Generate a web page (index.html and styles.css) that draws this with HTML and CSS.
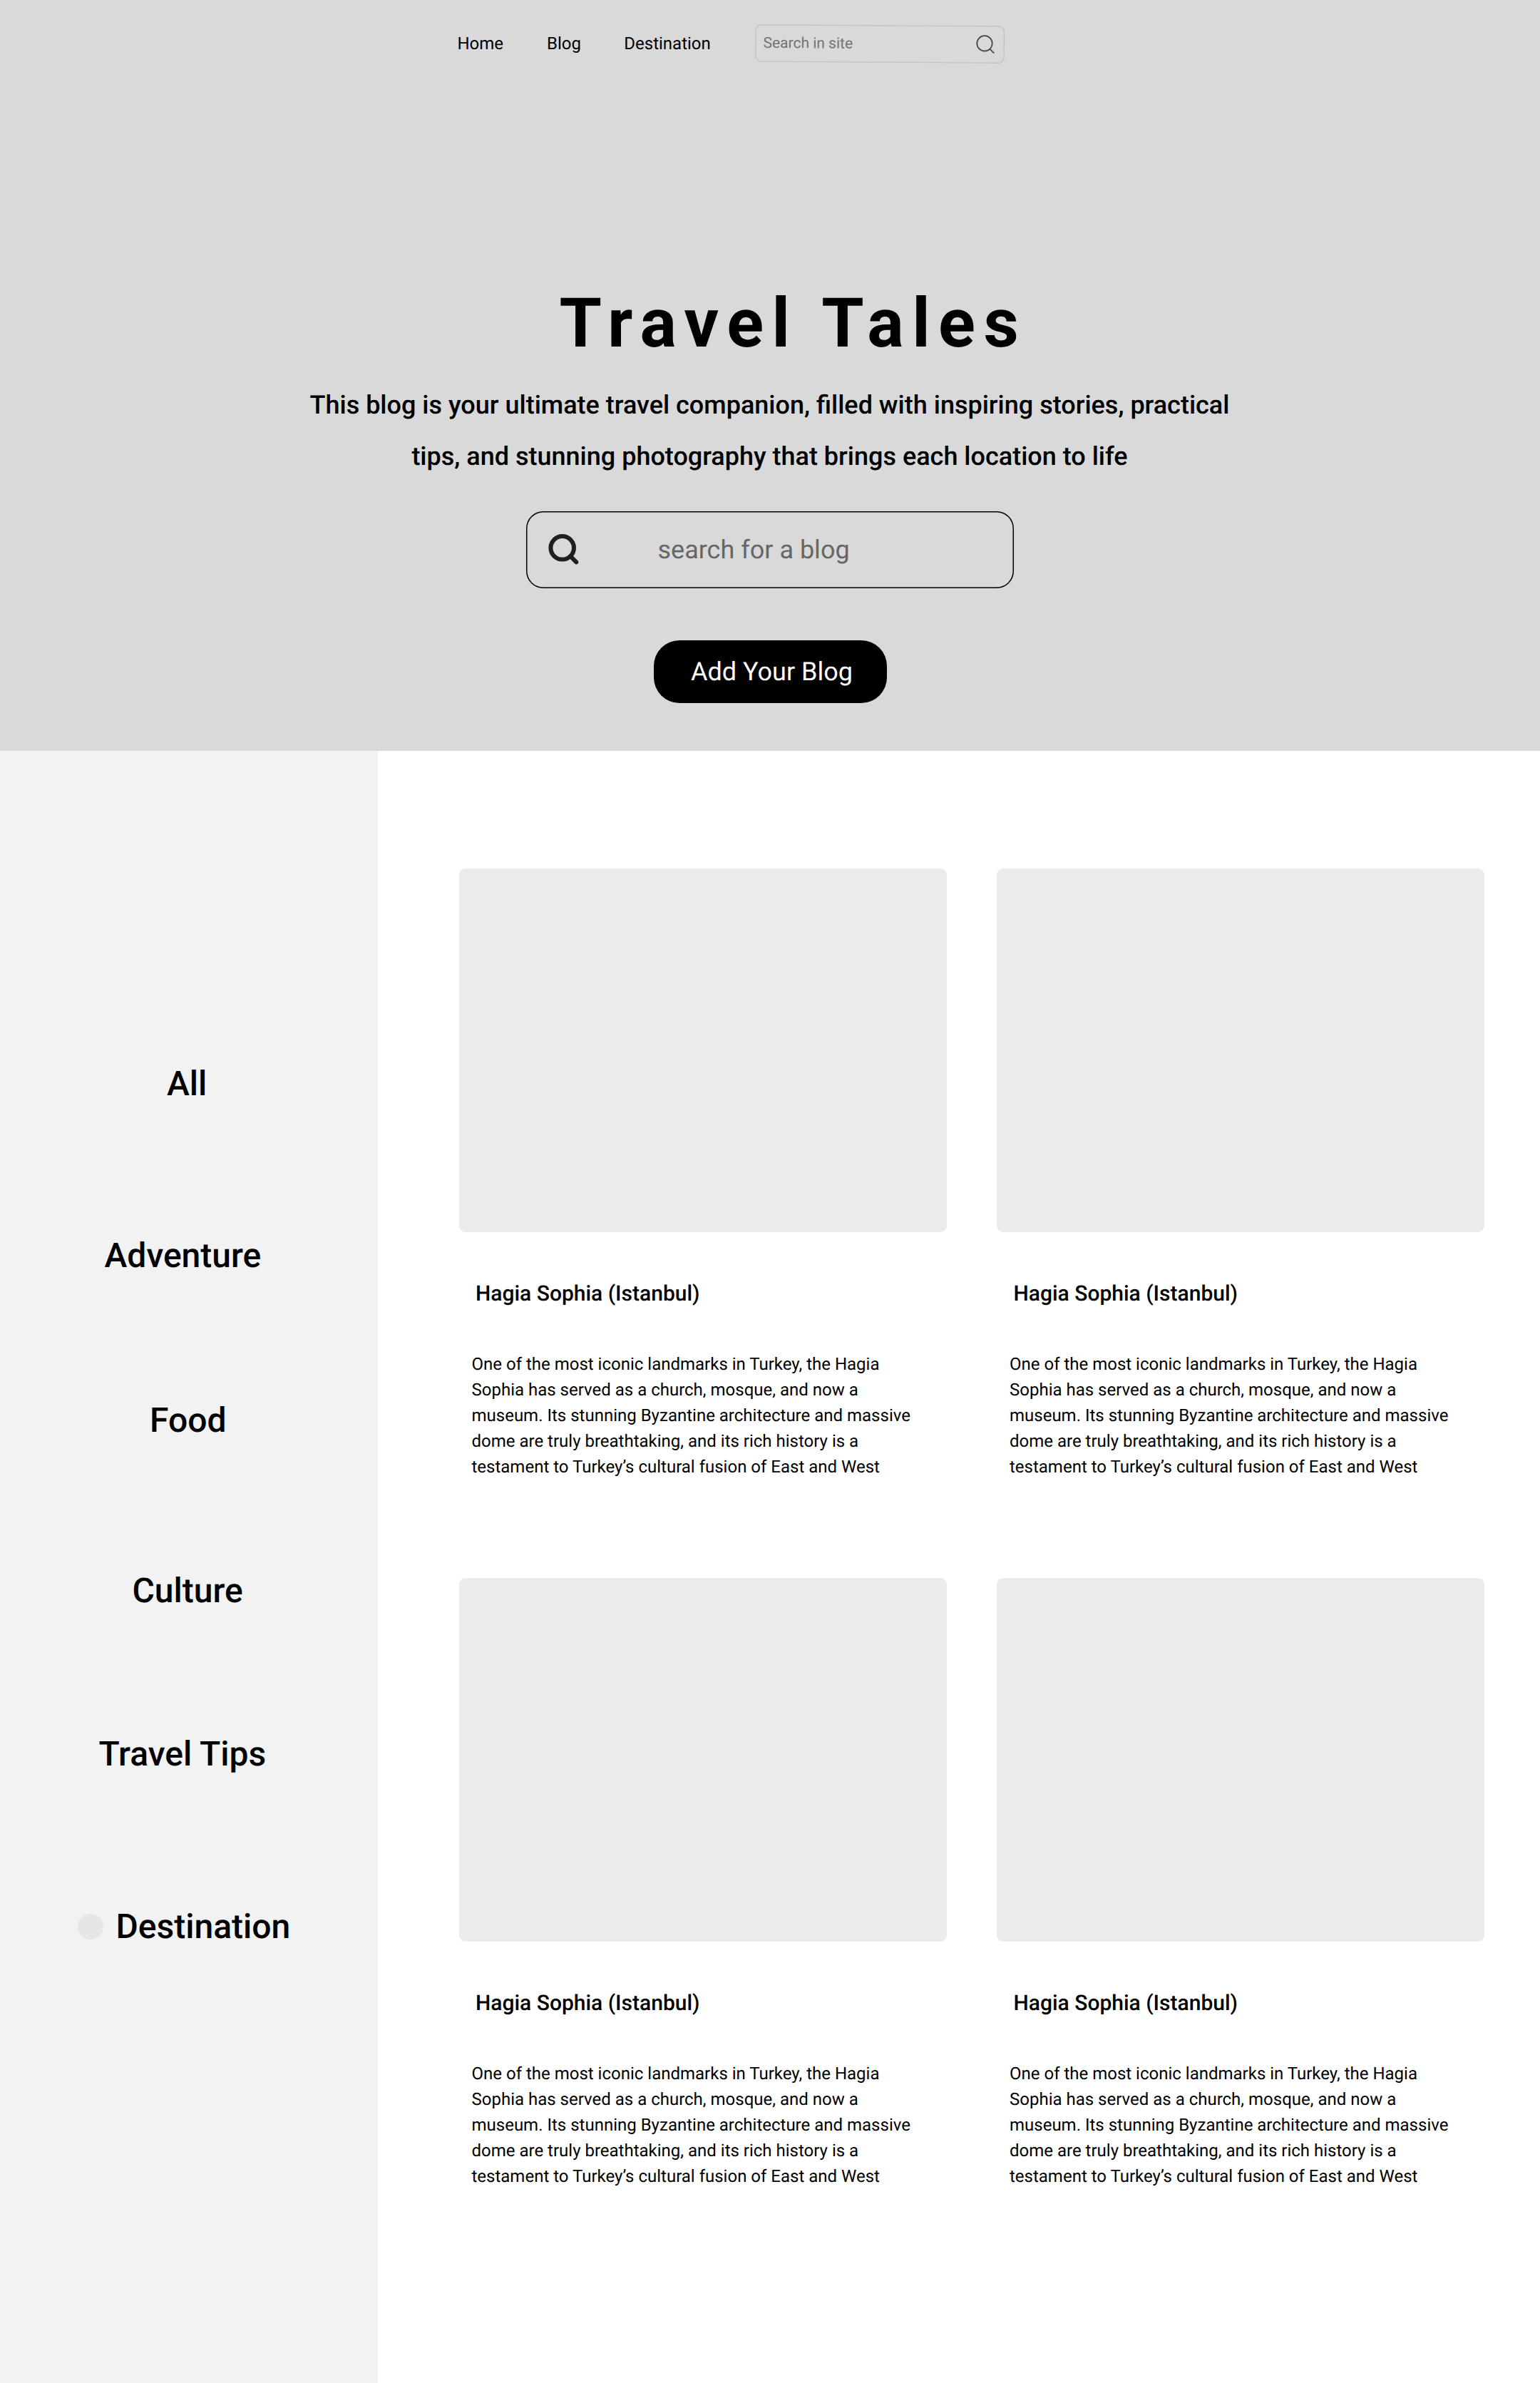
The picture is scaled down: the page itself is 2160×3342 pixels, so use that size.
FILE: index.html
```html
<!DOCTYPE html>
<html lang="en">
<head>
<meta charset="utf-8">
<title>Travel Tales</title>
<link rel="stylesheet" href="styles.css">
</head>
<body>
<header class="hero">
  <nav class="nav">
    <a class="nav-link">Home</a>
    <a class="nav-link">Blog</a>
    <a class="nav-link">Destination</a>
    <div class="site-search">
      <span class="site-search-text">Search in site</span>
      <svg class="site-search-icon" width="27" height="27" viewBox="0 0 27 27" fill="none" stroke="#444" stroke-width="1.7">
        <circle cx="12" cy="12" r="10.7"/>
        <path d="M19.3 19.6L25.4 25.6"/>
      </svg>
    </div>
  </nav>
  <h1 class="title">Travel Tales</h1>
  <p class="subtitle">This blog is your ultimate travel companion, filled with inspiring stories, practical<br>tips, and stunning photography that brings each location to life</p>
  <div class="blog-search">
    <svg class="blog-search-icon" width="44" height="44" viewBox="0 0 44 44" fill="none" stroke="#1f1f1f" stroke-linecap="round">
      <circle cx="19.7" cy="19.3" r="16.3" stroke-width="6"/>
      <path d="M31 31L39.3 39.3" stroke-width="6"/>
    </svg>
    <span class="blog-search-text">search for a blog</span>
  </div>
  <a class="add-button">Add Your Blog</a>
</header>
<div class="page">
  <aside class="sidebar">
    <a class="category all">All</a>
    <a class="category adventure">Adventure</a>
    <a class="category food">Food</a>
    <a class="category culture">Culture</a>
    <a class="category tips">Travel Tips</a>
    <a class="category destination"><span class="dot"></span>Destination</a>
  </aside>
  <main class="cards">
    <article class="card">
      <div class="card-image"></div>
      <h2 class="card-title">Hagia Sophia (Istanbul)</h2>
      <p class="card-text">One of the most iconic landmarks in Turkey, the Hagia<br>Sophia has served as a church, mosque, and now a<br>museum. Its stunning Byzantine architecture and massive<br>dome are truly breathtaking, and its rich history is a<br>testament to Turkey’s cultural fusion of East and West</p>
    </article>
    <article class="card">
      <div class="card-image"></div>
      <h2 class="card-title">Hagia Sophia (Istanbul)</h2>
      <p class="card-text">One of the most iconic landmarks in Turkey, the Hagia<br>Sophia has served as a church, mosque, and now a<br>museum. Its stunning Byzantine architecture and massive<br>dome are truly breathtaking, and its rich history is a<br>testament to Turkey’s cultural fusion of East and West</p>
    </article>
    <article class="card">
      <div class="card-image"></div>
      <h2 class="card-title">Hagia Sophia (Istanbul)</h2>
      <p class="card-text">One of the most iconic landmarks in Turkey, the Hagia<br>Sophia has served as a church, mosque, and now a<br>museum. Its stunning Byzantine architecture and massive<br>dome are truly breathtaking, and its rich history is a<br>testament to Turkey’s cultural fusion of East and West</p>
    </article>
    <article class="card">
      <div class="card-image"></div>
      <h2 class="card-title">Hagia Sophia (Istanbul)</h2>
      <p class="card-text">One of the most iconic landmarks in Turkey, the Hagia<br>Sophia has served as a church, mosque, and now a<br>museum. Its stunning Byzantine architecture and massive<br>dome are truly breathtaking, and its rich history is a<br>testament to Turkey’s cultural fusion of East and West</p>
    </article>
  </main>
</div>
</body>
</html>
```
FILE: styles.css
```css
* { box-sizing: border-box; margin: 0; padding: 0; }

body {
  width: 2160px;
  background: #fff;
  color: #000;
  font-family: Roboto, "Liberation Sans", sans-serif;
  text-rendering: geometricPrecision;
}

.hero {
  display: flex;
  flex-direction: column;
  align-items: center;
  height: 1053px;
  background: #d9d9d9;
}

.nav {
  display: grid;
  grid-template-columns: 125.5px 108.3px 183.7px 350px;
  align-items: center;
  align-self: flex-start;
  height: 55px;
  margin: 33.5px 0 0 641.5px;
}

.nav-link { font-size: 24px; line-height: 36px; white-space: nowrap; }

.site-search {
  display: flex;
  align-items: center;
  justify-content: space-between;
  height: 53px;
  padding: 0 13px 0 11.5px;
  border-radius: 9px;
  box-shadow: inset 0 0 0 1.5px #c4c4c4;
  transform: rotate(0.36deg);
}

.site-search-text { font-size: 21px; line-height: 36px; color: #737373; }
.site-search-icon { display: block; }

.title {
  align-self: flex-start;
  margin: 309px 0 0 784.5px;
  font-size: 96px;
  font-weight: 700;
  line-height: 113px;
  letter-spacing: 11.52px;
  white-space: nowrap;
}

.subtitle {
  margin: 21.5px 1px 0 0;
  font-size: 36px;
  font-weight: 500;
  line-height: 72px;
  text-align: center;
  white-space: nowrap;
}

.blog-search {
  display: flex;
  align-items: center;
  width: 684px;
  height: 108px;
  margin-top: 41px;
  padding-left: 30.5px;
  border-radius: 24px;
  box-shadow: inset 0 0 0 1.5px #000;
}

.blog-search-text {
  margin-left: 110px;
  font-size: 36px;
  line-height: 54px;
  color: #666;
}

.add-button {
  display: flex;
  align-items: center;
  justify-content: center;
  width: 327px;
  height: 87.5px;
  margin-top: 73px;
  padding-left: 5px;
  border-radius: 36px;
  background: #000;
  color: #fff;
  font-size: 36px;
  line-height: 54px;
}

.page { display: flex; height: 2289px; }

.sidebar {
  display: flex;
  flex-direction: column;
  width: 529.5px;
  padding-top: 431px;
  background: #f2f2f2;
}

.category {
  display: flex;
  align-items: center;
  font-size: 48px;
  font-weight: 500;
  line-height: 72px;
  white-space: nowrap;
}

.all { padding-left: 234px; }
.adventure { margin-top: 169px; padding-left: 146.5px; }
.food { margin-top: 159px; padding-left: 210px; }
.culture { margin-top: 167px; padding-left: 185.5px; }
.tips { margin-top: 157px; padding-left: 138.5px; }
.destination { margin-top: 170px; padding-left: 108.5px; }

.dot {
  width: 36px;
  height: 36px;
  margin-right: 18px;
  border-radius: 50%;
  background: #e6e6e6;
}

.cards {
  display: grid;
  grid-template-columns: 684px 684px;
  grid-auto-rows: 994.5px;
  column-gap: 70.5px;
  padding: 165px 0 0 114px;
}

.card-image { height: 510px; border-radius: 9px; background: #ebebeb; }

.card-title {
  margin: 64px 0 0 23.5px;
  font-size: 30px;
  font-weight: 500;
  line-height: 45px;
}

.card-text {
  margin: 58px 0 0 18px;
  font-size: 24px;
  line-height: 36px;
  white-space: nowrap;
}
```
